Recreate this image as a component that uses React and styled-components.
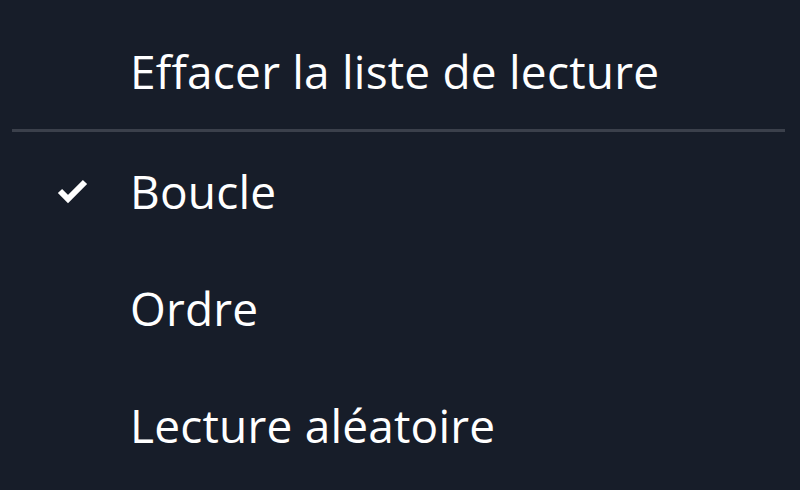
import { createGlobalStyle } from "styled-components"
import styled from "styled-components"

const Global = createGlobalStyle`
  html, body {
    margin: 0;
    padding: 0;
    background: #171d29;
  }
`

const Menu = styled.div`
  width: 800px;
  height: 490px;
  box-sizing: border-box;
  padding: 12px 15px 0 12px;
  background: #171d29;
  font-family: "Open Sans", "Noto Sans", sans-serif;
  color: #ffffff;
  overflow: hidden;
`

const Item = styled.div`
  height: 117px;
  display: flex;
  align-items: center;
  font-size: 46px;
  font-weight: 500;
  letter-spacing: 0.2px;
`

const Mark = styled.div`
  width: 118px;
  display: flex;
  align-items: center;
  padding-left: 45px;
  box-sizing: border-box;
`

const Separator = styled.div`
  height: 3px;
  background: #3b404b;
`

const Check = () => (
  <svg width="32" height="26" viewBox="0 0 32 26">
    <polyline points="3,13 11,21 28,4" fill="none" stroke="#fff" strokeWidth="6" strokeLinejoin="miter" />
  </svg>
)

const items = [
  { label: "Boucle", checked: true },
  { label: "Ordre" },
  { label: "Lecture aléatoire" },
]

export default function App() {
  return (
    <>
      <Global />
      <Menu>
        <Item>
          <Mark />
          <span>Effacer la liste de lecture</span>
        </Item>
        <Separator />
        {items.map((item) => (
          <Item key={item.label}>
            <Mark>{item.checked && <Check />}</Mark>
            <span>{item.label}</span>
          </Item>
        ))}
      </Menu>
    </>
  )
}
